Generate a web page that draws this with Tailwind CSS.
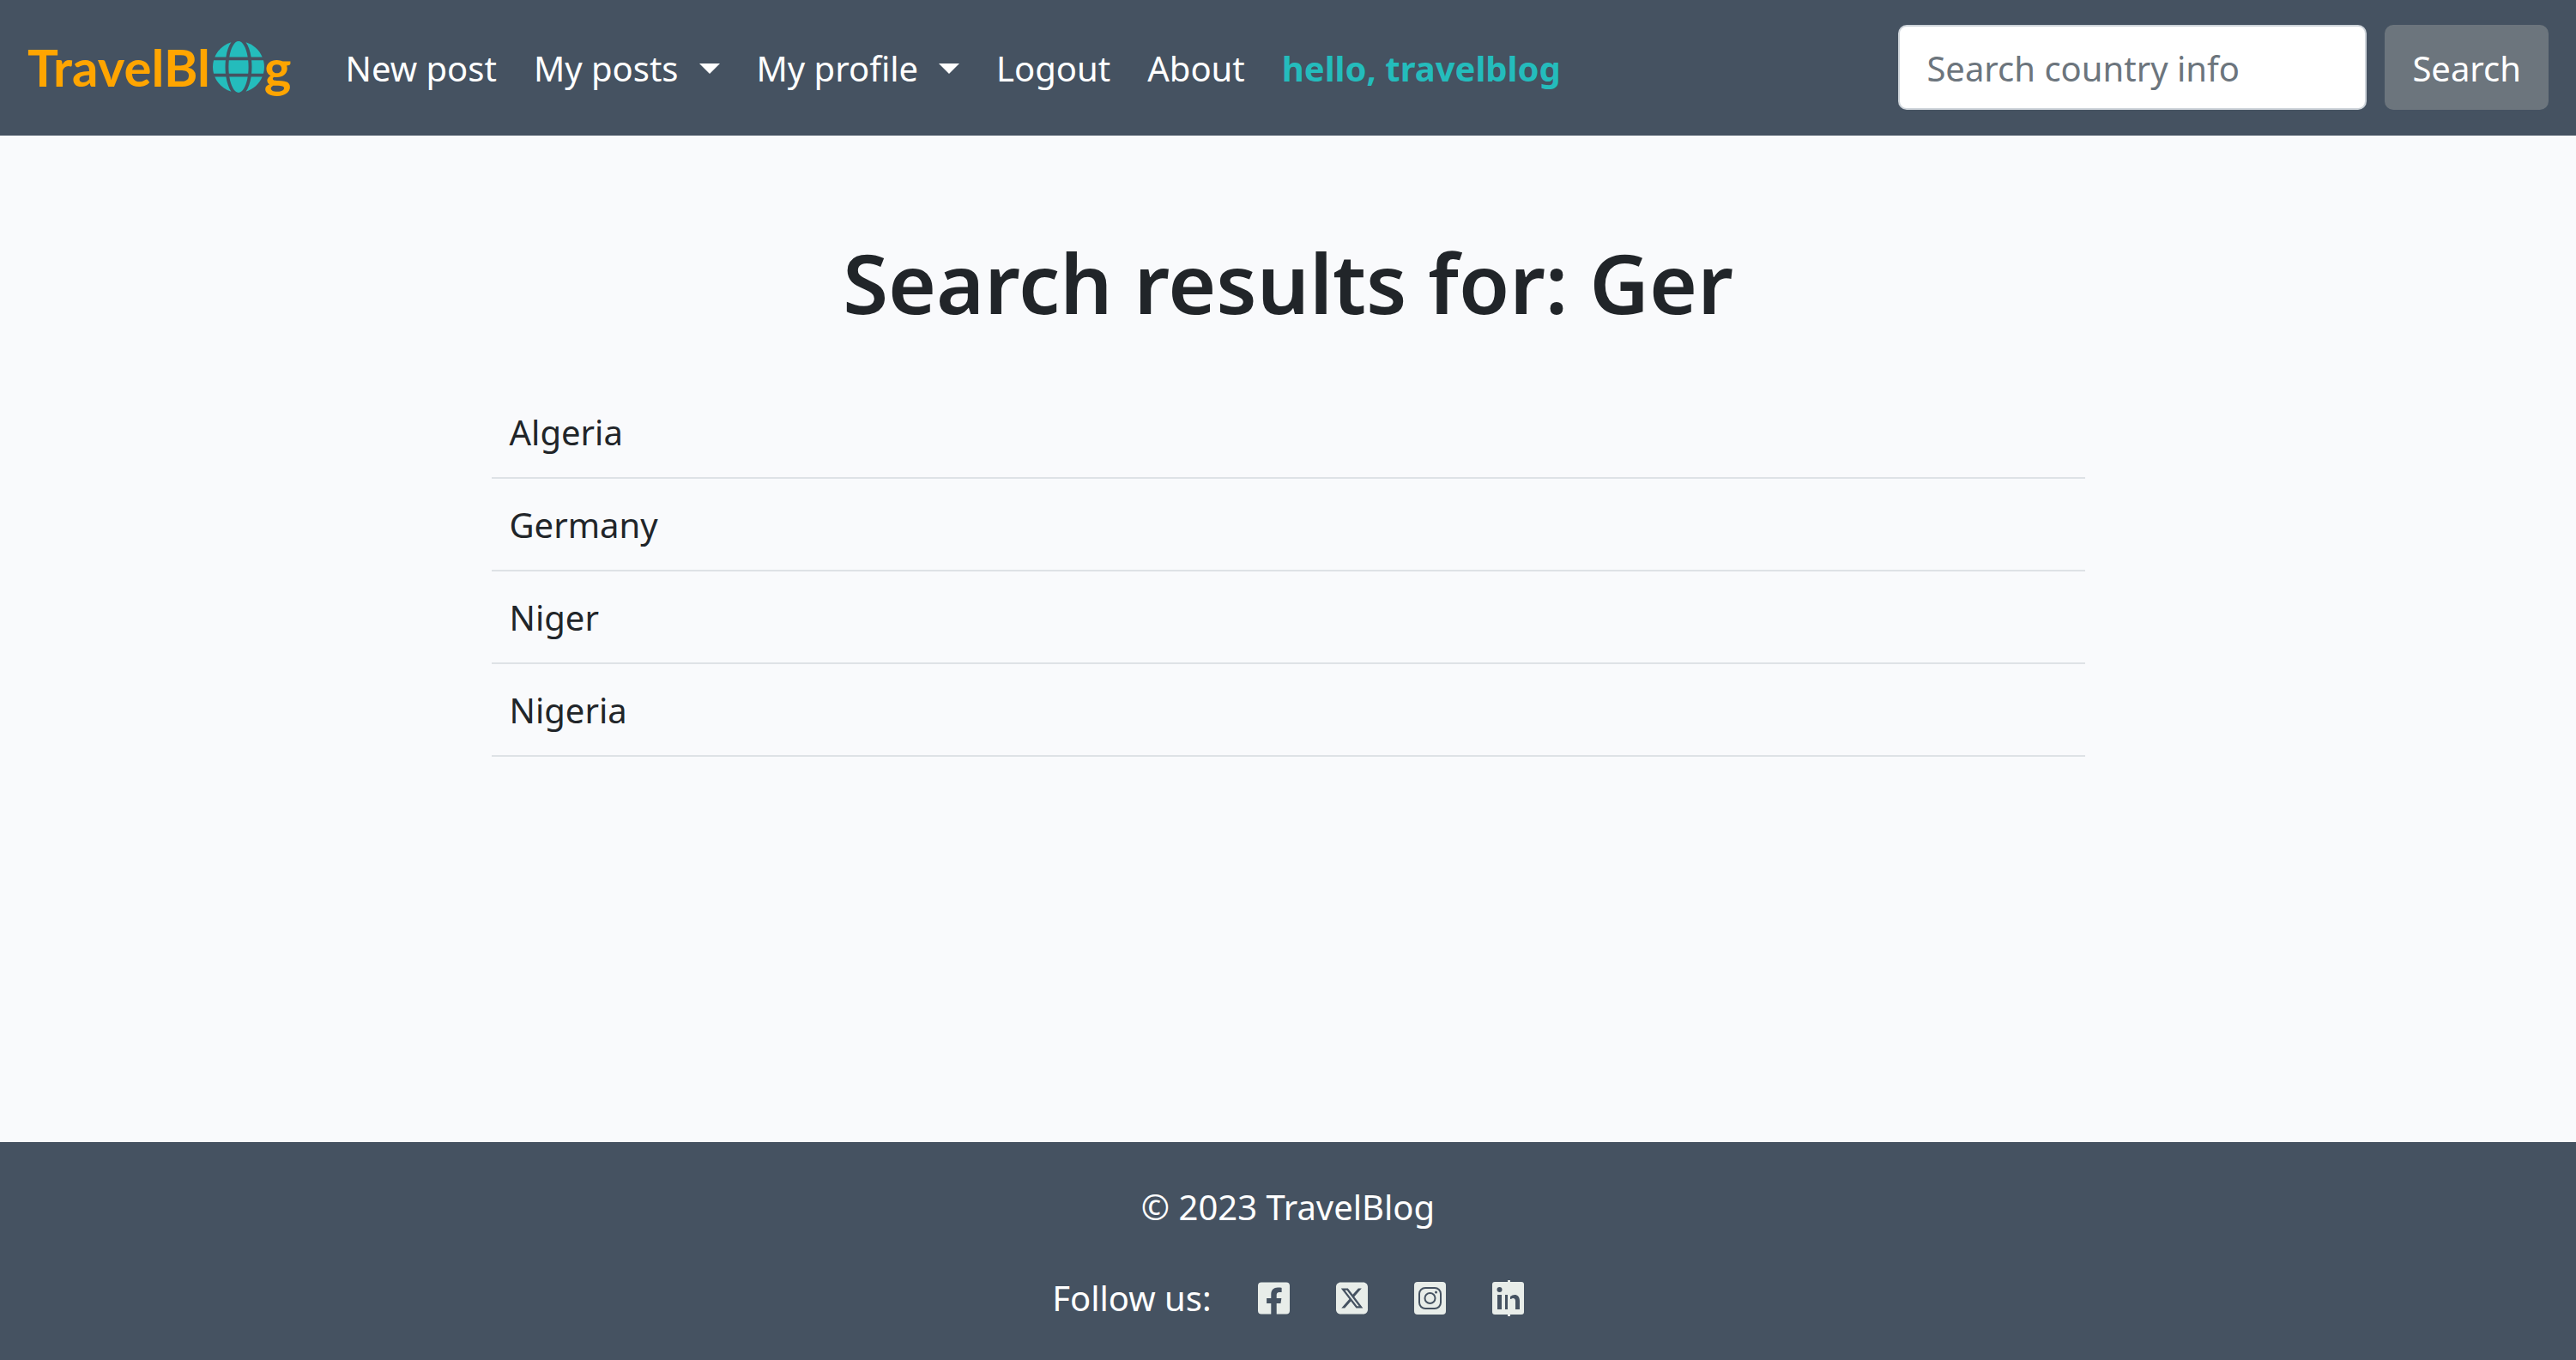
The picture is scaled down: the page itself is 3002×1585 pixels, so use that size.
<!DOCTYPE html>
<html lang="en">
<head>
<meta charset="utf-8">
<meta name="viewport" content="width=device-width, initial-scale=1">
<title>TravelBlog</title>
<script src="https://cdn.jsdelivr.net/npm/@tailwindcss/browser@4"></script>
</head>
<body class="flex min-h-screen flex-col bg-[#f9fafc] font-['Noto_Sans',sans-serif] text-[40px] leading-[64px] text-[#212529]">
<header class="bg-[#455261]">
  <nav class="flex items-center px-8 pt-[29px] pb-[30px]">
    <a href="#" class="mr-[63px] flex items-center pb-[2px] font-['Lato',sans-serif] text-[60px] font-bold text-[#ffa500]" aria-label="TravelBlog">TravelBl<svg class="ml-[3px] size-[60px]" viewBox="0 0 496 496" fill="#24bcbc" aria-hidden="true"><path transform="translate(0 -8)" d="M336.500 160C322 70.700 287.800 8 248 8s-74 62.700-88.500 152h177zM152 256c0 22.200 1.200 43.500 3.300 64h185.300c2.100-20.500 3.300-41.800 3.300-64s-1.200-43.500-3.300-64H155.300c-2.100 20.500-3.300 41.800-3.300 64zm324.700-96c-28.600-67.900-86.500-120.400-158-141.600 24.400 33.800 41.200 84.700 50 141.600h108zM177.200 18.400C105.800 39.600 47.800 92.100 19.300 160h108c8.700-56.900 25.500-107.800 49.900-141.600zM487.400 192H372.700c2.100 21 3.300 42.500 3.300 64s-1.200 43-3.300 64h114.600c5.500-20.500 8.600-41.800 8.600-64s-3.100-43.500-8.500-64zM120 256c0-21.500 1.200-43 3.300-64H8.600C3.200 212.500 0 233.800 0 256s3.200 43.500 8.600 64h114.600c-2-21-3.200-42.500-3.200-64zm39.500 96c14.500 89.300 48.700 152 88.500 152s74-62.700 88.500-152h-177zm159.300 141.600c71.400-21.200 129.400-73.700 158-141.600h-108c-8.800 56.900-25.600 107.800-50 141.600zM19.300 352c28.600 67.900 86.500 120.400 158 141.600-24.400-33.800-41.200-84.700-50-141.600h-108z"/></svg>g</a>
    <ul class="flex items-center gap-[43px] whitespace-nowrap pt-[2px] text-white">
      <li><a href="#">New post</a></li>
      <li><button type="button" class="flex items-center gap-6">My posts<svg class="h-3 w-6" viewBox="0 0 24 12" fill="currentColor" aria-hidden="true"><path d="M0 0h24L12 12z"/></svg></button></li>
      <li><button type="button" class="flex items-center gap-6">My profile<svg class="h-3 w-6" viewBox="0 0 24 12" fill="currentColor" aria-hidden="true"><path d="M0 0h24L12 12z"/></svg></button></li>
      <li><a href="#">Logout</a></li>
      <li><a href="#">About</a></li>
      <li class="font-bold text-[#24bcbc]">hello, travelblog</li>
    </ul>
    <form class="ml-auto flex gap-[21px]" role="search">
      <input type="search" aria-label="Search country info" placeholder="Search country info" class="h-[99px] w-[546px] rounded-[10px] border-2 border-[#ced4da] bg-white px-[31px] pt-[2px] placeholder:text-[#6c757d]">
      <button type="submit" class="h-[99px] rounded-[10px] bg-[#6c757d] px-8 pt-[2px] text-white">Search</button>
    </form>
  </nav>
</header>
<main class="mx-auto w-full max-w-[1857px] grow pt-[108px]">
  <h1 class="text-center text-[96px] leading-[126px] font-semibold">Search results for: Ger</h1>
  <table class="mt-[58px] w-full">
    <tbody>
      <tr class="border-b-2 border-[#dee2e6]"><td class="px-[21px] pt-[22px] pb-5">Algeria</td></tr>
      <tr class="border-b-2 border-[#dee2e6]"><td class="px-[21px] pt-[22px] pb-5">Germany</td></tr>
      <tr class="border-b-2 border-[#dee2e6]"><td class="px-[21px] pt-[22px] pb-5">Niger</td></tr>
      <tr class="border-b-2 border-[#dee2e6]"><td class="px-[21px] pt-[22px] pb-5">Nigeria</td></tr>
    </tbody>
  </table>
</main>
<footer class="flex flex-col items-center gap-[42px] bg-[#455261] pt-11 pb-10 text-white">
  <p>© 2023 TravelBlog</p>
  <div class="flex items-center gap-[54px]">
    <span>Follow us:</span>
    <a href="#" aria-label="Facebook"><svg class="h-[38px] w-[37px]" viewBox="0 32 448 448" fill="#e8ede9"><path d="M400 32H48A48 48 0 0 0 0 80v352a48 48 0 0 0 48 48h137.250V327.690h-63V256h63v-54.640c0-62.150 37-96.480 93.670-96.480 27.140 0 55.520 4.840 55.520 4.840v61h-31.270c-30.810 0-40.420 19.120-40.420 38.730V256h68.780l-11 71.690h-57.780V480H400a48 48 0 0 0 48-48V80a48 48 0 0 0-48-48z"/></svg></a>
    <a href="#" aria-label="X"><svg class="h-[38px] w-[37px]" viewBox="0 32 448 448" fill="#e8ede9"><path d="M64 32C28.700 32 0 60.700 0 96V416c0 35.300 28.700 64 64 64H384c35.300 0 64-28.700 64-64V96c0-35.300-28.700-64-64-64H64zm297.100 84L257.300 234.600 379.400 396H283.800L209 298.100 123.300 396H75.800l111-126.900L69.700 116h98l67.700 89.500L313.600 116h47.500zM323.300 367.600L153.400 142.900H125.100L296.900 367.600h26.300z"/></svg></a>
    <a href="#" aria-label="Instagram"><svg class="h-[38px] w-[37px]" viewBox="0 0 37 38" fill="none"><rect width="37" height="38" rx="4" fill="#e8ede9"/><rect x="6" y="7" width="25" height="24" rx="7" stroke="#455261" stroke-width="2"/><circle cx="18.500" cy="19" r="6" stroke="#455261" stroke-width="2"/><circle cx="25.500" cy="12" r="1.500" fill="#455261"/></svg></a>
    <a href="#" aria-label="LinkedIn"><svg class="h-[42px] w-[37px]" viewBox="0 0 37 42"><rect y="2" width="37" height="38" rx="3" fill="#e8ede9"/><g fill="#455261"><circle cx="8.500" cy="11" r="3"/><path d="M6 17h5v17H6zM15 17h3v17h-3zM21 19c5-4 11-2 11 5v10h-5V24c0-3-3-4-5-2h-1z"/></g><path d="M18 0h3v42h-3z" fill="#e8ede9"/></svg></a>
  </div>
</footer>
</body>
</html>
